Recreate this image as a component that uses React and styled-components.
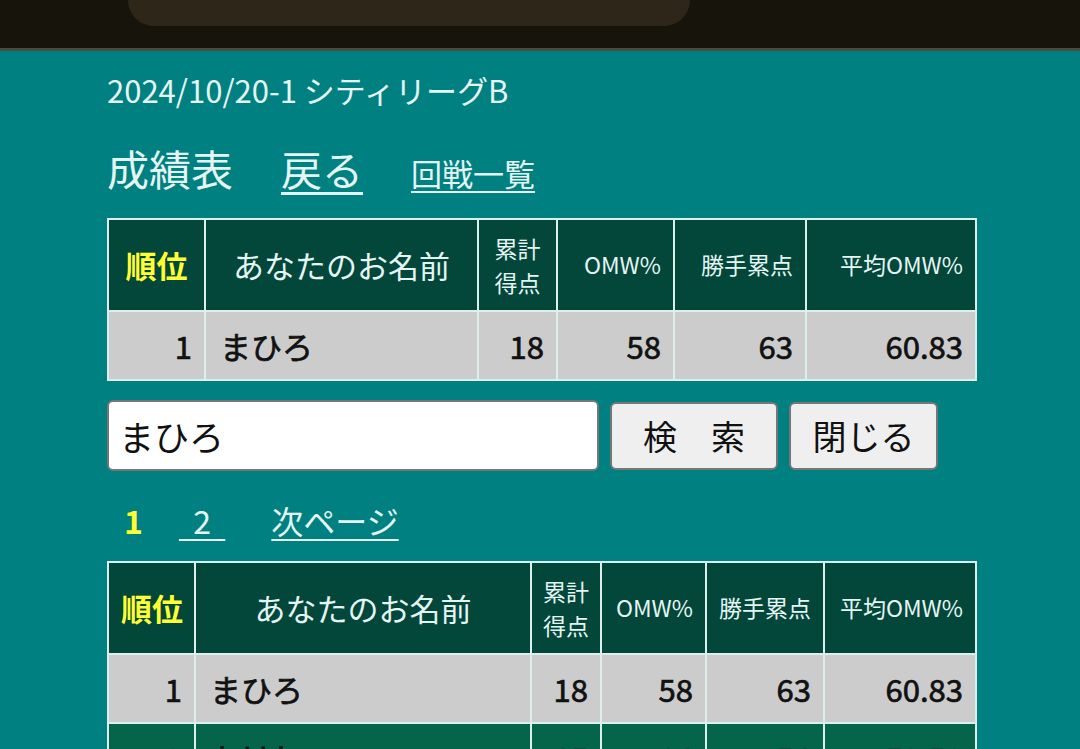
import React from 'react'
import styled, {createGlobalStyle} from 'styled-components'

const GlobalStyle = createGlobalStyle`
  body {
    margin: 0;
    background: #008080;
    font-family: "Noto Sans CJK JP", "Noto Sans", sans-serif;
  }
`

const table1 = [97, 273, 79, 117, 132, 170]
const table2 = [87, 336, 70, 105, 118, 152]

const rows = [
  {rank: 1, name: 'まひろ', total: 18, omw: 58, katte: 63, avg: '60.83', tone: 'gray'},
  {rank: 2, name: 'たけし', total: 15, omw: 64, katte: 54, avg: '59.50', tone: 'green'}
]

const ScoreTable = ({widths, data, top}) => (
  <Table $top={top}>
    <colgroup>
      {widths.map((w, i) => (
        <col key={i} style={{width: w}} />
      ))}
    </colgroup>
    <thead>
      <tr>
        <Head $align="center">
          <Rank>順位</Rank>
        </Head>
        <Head $align="center" $size={31}>
          あなたのお名前
        </Head>
        <Head $align="center" $tight>
          累計
          <br />
          得点
        </Head>
        <Head>OMW%</Head>
        <Head>勝手累点</Head>
        <Head>平均OMW%</Head>
      </tr>
    </thead>
    <tbody>
      {data.map(r => (
        <tr key={r.rank}>
          <Cell $tone={r.tone}>{r.rank}</Cell>
          <Cell $tone={r.tone} $align="left">
            {r.name}
          </Cell>
          <Cell $tone={r.tone}>{r.total}</Cell>
          <Cell $tone={r.tone}>{r.omw}</Cell>
          <Cell $tone={r.tone}>{r.katte}</Cell>
          <Cell $tone={r.tone}>{r.avg}</Cell>
        </tr>
      ))}
    </tbody>
  </Table>
)

export default function App() {
  return (
    <>
      <GlobalStyle />
      <TopBar>
        <Notch />
      </TopBar>
      <Page>
        <Event>2024/10/20-1 シティリーグB</Event>
        <TitleRow>
          <Title>成績表</Title>
          <BigLink href="#">戻る</BigLink>
          <SmallLink href="#">回戦一覧</SmallLink>
        </TitleRow>

        <ScoreTable widths={table1} data={rows.slice(0, 1)} top={26} />

        <SearchRow>
          <SearchInput defaultValue="まひろ" />
          <Button $w={168}>検　索</Button>
          <Button $w={149}>閉じる</Button>
        </SearchRow>

        <Pager>
          <Current>1</Current>
          <PageLink href="#">{'\u00a0\u00a02\u00a0\u00a0'}</PageLink>
          <PageLink href="#" $wide>
            次ページ
          </PageLink>
        </Pager>

        <ScoreTable widths={table2} data={rows} top={20} />
      </Page>
    </>
  )
}

const TopBar = styled.div`
  height: 48px;
  background: #17140c;
  border-bottom: 3px solid #4b4b3e;
  padding-left: 128px;
`

const Notch = styled.div`
  width: 562px;
  height: 26px;
  background: #2e2719;
  border-radius: 0 0 40px 40px;
`

const Page = styled.div`
  padding: 18px 0 0 107px;
  color: #e4f5f3;
  height: 680px;
  overflow: hidden;
`

const Event = styled.div`
  font-size: 31px;
  line-height: 42px;
`

const TitleRow = styled.div`
  display: flex;
  align-items: baseline;
  margin-top: 27px;
  height: 54px;
`

const Title = styled.span`
  font-size: 42px;
  line-height: 54px;
  margin-right: 48px;
`

const BigLink = styled.a`
  color: #e4f5f3;
  font-size: 41px;
  margin-right: 48px;
  text-underline-offset: 6px;
  text-decoration-thickness: 3px;
`

const SmallLink = styled.a`
  color: #e4f5f3;
  font-size: 31px;
  text-underline-offset: 5px;
  text-decoration-thickness: 2px;
`

const Table = styled.table`
  border-collapse: collapse;
  table-layout: fixed;
  width: 868px;
  margin-top: ${p => p.$top}px;
  border: 2px solid #dcefed;
`

const Head = styled.th`
  height: 90px;
  padding: 0 12px;
  background: #03463a;
  border: 2px solid #dcefed;
  color: #e4f5f3;
  font-weight: 400;
  font-size: ${p => p.$size || 23}px;
  line-height: ${p => (p.$tight ? '34px' : '1.2')};
  text-align: ${p => p.$align || 'right'};
  white-space: nowrap;
  ${p => p.$tight && 'padding: 0;'}
`

const Rank = styled.span`
  color: #ffff33;
  font-weight: 700;
  font-size: 31px;
`

const Cell = styled.td`
  height: 67px;
  padding: 0 12px 0 14px;
  background: ${p => (p.$tone === 'green' ? '#05654a' : '#cccccc')};
  border: 2px solid #dcefed;
  color: #111;
  font-size: 31px;
  font-weight: 400;
  -webkit-text-stroke: 0.7px #111;
  text-align: ${p => p.$align || 'right'};
  white-space: nowrap;
`

const SearchRow = styled.div`
  display: flex;
  align-items: center;
  gap: 11px;
  margin-top: 19px;
`

const SearchInput = styled.input`
  box-sizing: border-box;
  width: 492px;
  height: 71px;
  border: 2px solid #767676;
  border-radius: 6px;
  padding: 0 10px;
  font-family: "Noto Sans CJK JP", sans-serif;
  font-size: 35px;
  color: #111;
  background: #fff;
`

const Button = styled.button`
  box-sizing: border-box;
  width: ${p => p.$w}px;
  height: 68px;
  border: 2px solid #767676;
  border-radius: 6px;
  background: #efefef;
  color: #111;
  font-family: "Noto Sans CJK JP", sans-serif;
  font-size: 34px;
  padding: 0;
`

const Pager = styled.div`
  display: flex;
  align-items: baseline;
  gap: 36px;
  margin-top: 28px;
  padding-left: 17px;
  font-size: 32px;
  line-height: 42px;
`

const Current = styled.span`
  color: #ffff33;
  font-weight: 700;
`

const PageLink = styled.a`
  color: #e4f5f3;
  text-underline-offset: 5px;
  text-decoration-thickness: 2px;
  margin-left: ${p => (p.$wide ? '10px' : '0')};
`
